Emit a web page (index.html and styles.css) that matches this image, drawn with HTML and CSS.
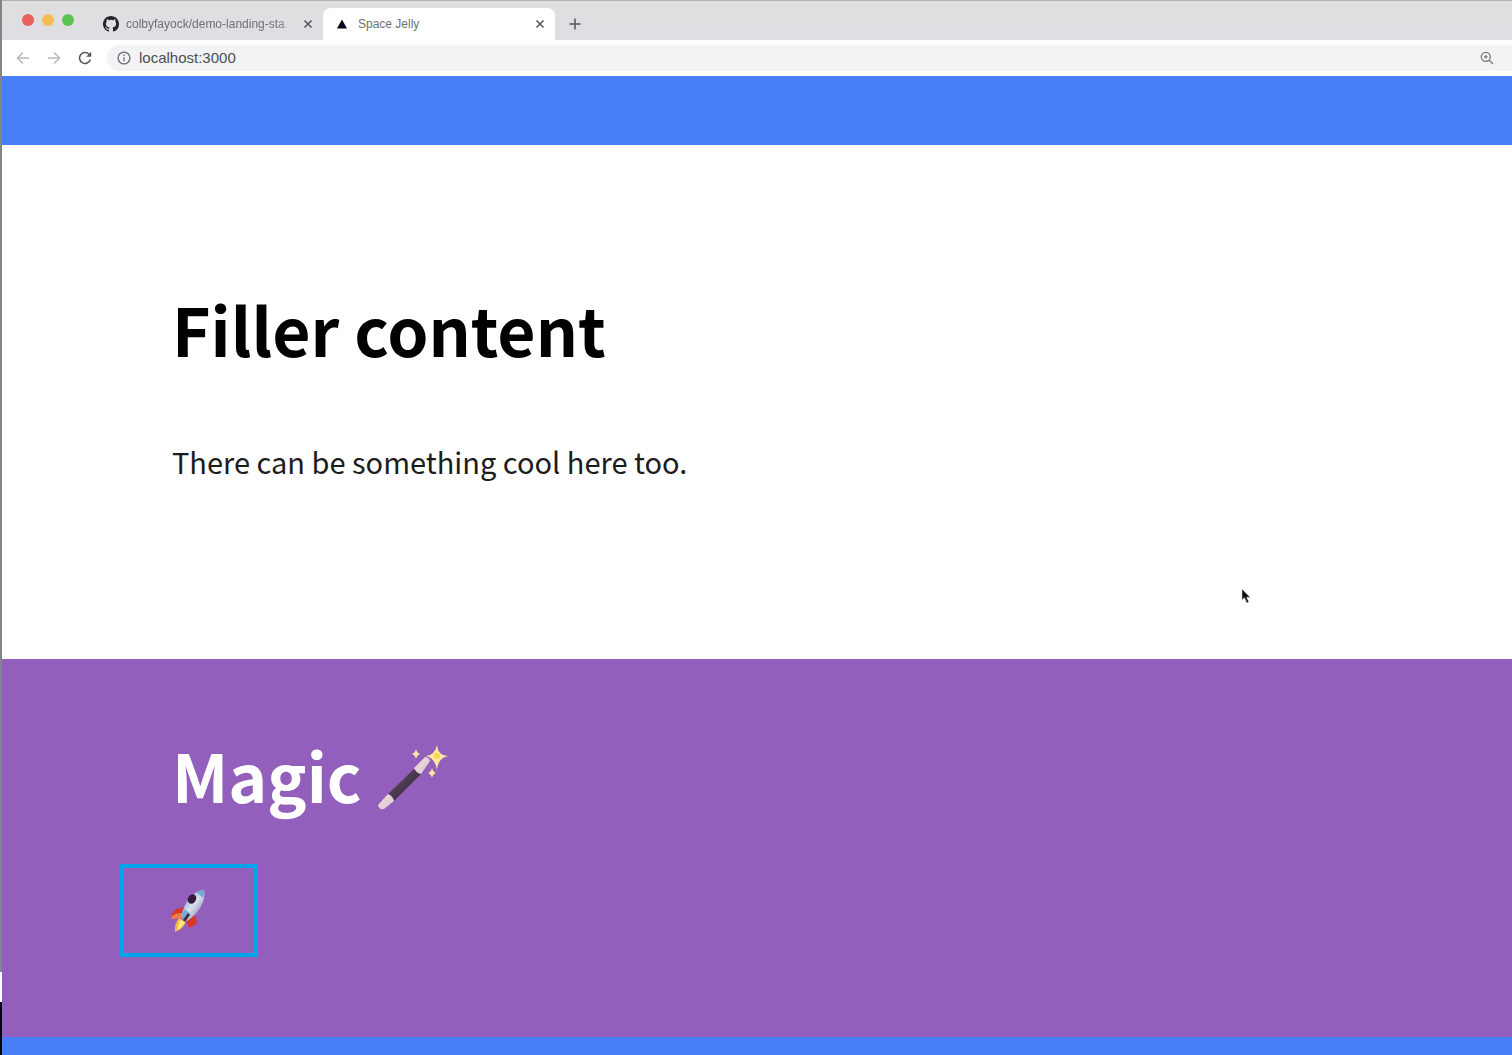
FILE: index.html
```html
<!DOCTYPE html>
<html lang="en">
<head>
<meta charset="utf-8">
<title>Space Jelly</title>
<link rel="stylesheet" href="styles.css">
</head>
<body>
<div class="desktop">
  <div class="window">
    <header class="chrome">
      <div class="tab-strip">
        <div class="lights">
          <button class="light close" aria-label="Close window"></button>
          <button class="light minimise" aria-label="Minimise window"></button>
          <button class="light expand" aria-label="Expand window"></button>
        </div>
        <div class="tab">
          <svg class="github" viewBox="0 0 16 16" aria-hidden="true"><path fill="#24242a" d="M8 0C3.58 0 0 3.58 0 8c0 3.54 2.29 6.53 5.47 7.59.4.07.55-.17.55-.38 0-.19-.01-.82-.01-1.49-2.01.37-2.53-.49-2.69-.94-.09-.23-.48-.94-.82-1.13-.28-.15-.68-.52-.01-.53.63-.01 1.08.58 1.23.82.72 1.21 1.87.87 2.33.66.07-.52.28-.87.51-1.07-1.78-.2-3.64-.89-3.64-3.95 0-.87.31-1.59.82-2.15-.08-.2-.36-1.02.08-2.12 0 0 .67-.21 2.2.82a7.6 7.6 0 0 1 4 0c1.53-1.04 2.2-.82 2.2-.82.44 1.1.16 1.92.08 2.12.51.56.82 1.27.82 2.15 0 3.07-1.87 3.75-3.65 3.95.29.25.54.73.54 1.48 0 1.07-.01 1.93-.01 2.2 0 .21.15.46.55.38A8 8 0 0 0 16 8c0-4.42-3.58-8-8-8z"/></svg>
          <span class="tab-title faded">colbyfayock/demo-landing-sta</span>
          <button class="icon-button" aria-label="Close tab"><svg class="cross" viewBox="0 0 10 10"><path d="M1.5 1.5l7 7M8.5 1.5l-7 7"/></svg></button>
        </div>
        <div class="tab active">
          <svg class="triangle" viewBox="0 0 10 10" aria-hidden="true"><path fill="#08081c" d="M5 .5L10 9.5H0z"/></svg>
          <span class="tab-title">Space Jelly</span>
          <button class="icon-button" aria-label="Close tab"><svg class="cross" viewBox="0 0 10 10"><path d="M1.5 1.5l7 7M8.5 1.5l-7 7"/></svg></button>
        </div>
        <button class="icon-button new-tab" aria-label="New tab"><svg viewBox="0 0 12 12"><path d="M6 .5v11M.5 6h11"/></svg></button>
      </div>
      <div class="toolbar">
        <button class="icon-button muted" aria-label="Back"><svg viewBox="0 0 14 14"><path d="M13 7H1.500M7 1.500L1.500 7L7 12.500"/></svg></button>
        <button class="icon-button muted" aria-label="Forward"><svg viewBox="0 0 14 14"><path d="M1 7h11.500M7 1.500L12.500 7L7 12.500"/></svg></button>
        <button class="icon-button" aria-label="Reload"><svg viewBox="0 0 14 14"><path d="M12.300 8.500A5.500 5.500 0 1 1 11 3.200"/><path class="solid" d="M13.200 .8v5H8.200z"/></svg></button>
        <div class="address">
          <svg class="info" viewBox="0 0 14 14" aria-hidden="true"><circle cx="7" cy="7" r="5.900"/><path d="M7 6.200v4M7 3.600v1.300"/></svg>
          <input class="url" type="text" aria-label="Address" value="localhost:3000" spellcheck="false">
          <button class="icon-button zoom" aria-label="Zoom"><svg viewBox="0 0 14 14"><circle cx="5.800" cy="5.800" r="4.500"/><path d="M9.200 9.200l3.800 3.800M5.800 4v3.600M4 5.800h3.600"/></svg></button>
        </div>
      </div>
    </header>
    <main class="page">
      <div class="band"></div>
      <section class="filler">
        <h1 class="heading">Filler content</h1>
        <p class="copy">There can be something cool here too.</p>
      </section>
      <section class="magic">
        <h2 class="heading">Magic
          <svg class="wand" viewBox="0 0 72 68" role="img" aria-label="Magic wand">
            <defs>
              <linearGradient id="rod" x1="0" y1="0" x2="1" y2="1"><stop offset="0" stop-color="#77717c"/><stop offset=".45" stop-color="#4d3b50"/><stop offset="1" stop-color="#2e2136"/></linearGradient>
              <linearGradient id="tip" x1="0" y1="0" x2="1" y2="1"><stop offset="0" stop-color="#fff3ef"/><stop offset="1" stop-color="#ceb2bd"/></linearGradient>
            </defs>
            <path fill="url(#rod)" d="M12 51L39 25L45 31L18 58z"/>
            <path fill="url(#tip)" d="M38 25L49 14Q53 14 54 18L45 31Q40 30 38 25zM12 51Q17 53 18 58L8 66Q3 67 2 62z"/>
            <path fill="#ffe8a0" d="M61 2Q62 13 72 13Q62 15 61 27Q59 15 50 13Q59 12 61 2zM40 6Q41 10 44 11Q41 12 40 16Q39 12 36 11Q39 10 40 6zM56 25Q57 29 60 30Q57 31 56 35Q55 31 52 30Q55 29 56 25z"/>
            <circle cx="61" cy="13" r="3" fill="#ffd54e"/>
          </svg>
        </h2>
        <div class="rocket-line">
          <svg class="rocket" viewBox="0 0 36 44" role="img" aria-label="Rocket">
            <defs><linearGradient id="hull" x1="0" y1="0" x2="1" y2="1"><stop offset="0" stop-color="#5688b8"/><stop offset=".5" stop-color="#d8e1f0"/><stop offset="1" stop-color="#736b99"/></linearGradient></defs>
            <path fill="#d9362c" d="M14 18L6 20Q1 24 1 30L11 27zM24 26Q29 32 25 36L19 39L16 32z"/>
            <path fill="#ed8144" d="M2 27Q7 23 14 25L11 29L1 30z"/>
            <path fill="#f7b445" d="M9 29L16 32Q14 40 5 43Q4 35 9 29z"/>
            <path fill="#ffe887" d="M10 31L15 33Q12 39 7 41z"/>
            <path fill="url(#hull)" d="M34 1Q36 9 30 19Q25 27 17 32L11 28Q13 18 20 8Q26 2 34 1z"/>
            <path fill="#79a9d3" d="M34 1Q35 5 33 9L26 3Q30 1 34 1zM14 20L20 24L16 31L11 28z"/>
            <ellipse cx="22" cy="10" rx="4" ry="5" transform="rotate(30 22 10)" fill="#351a3d"/>
            <path stroke="#39324e" stroke-width="3" d="M19 25L14 32"/>
          </svg>
          <span class="highlight"></span>
        </div>
      </section>
      <footer class="foot"></footer>
    </main>
  </div>
  <svg class="cursor" viewBox="0 0 10 16" aria-hidden="true"><path fill="#111" stroke="#ccc" stroke-width=".6" d="M1 1v11l2.500-2.300L5.800 15l2-1-2.200-4.700H9z"/></svg>
</div>
</body>
</html>
```
FILE: styles.css
```css
* { box-sizing: border-box; }

body {
  margin: 0;
  font-family: "Noto Sans CJK SC", "Noto Sans", sans-serif;
}

h1, h2, p { margin: 0; }

button {
  padding: 0;
  border: 0;
  background: none;
}

.desktop {
  position: relative;
  display: flex;
  min-height: 100vh;
  padding-left: 2px;
  overflow: hidden;
  background: linear-gradient(#858585 972px, #fff 972px, #fff 1002px, #000 1002px);
}

.window {
  flex: 1;
  min-width: 0;
  display: flex;
  flex-direction: column;
}

.chrome { font-family: "Liberation Sans", Arial, sans-serif; }

.tab-strip {
  display: flex;
  align-items: flex-end;
  height: 40px;
  border-top: 1px solid #b0b0b0;
  background: linear-gradient(#dfdfdf, #dfdee4);
}

.lights {
  display: flex;
  align-items: center;
  gap: 8px;
  width: 89px;
  height: 40px;
  padding-left: 20px;
}

.light {
  width: 12px;
  height: 12px;
  border-radius: 50%;
}

.close { background: #ea605c; }
.minimise { background: #f3bd50; }
.expand { background: #5dc351; }

.tab {
  display: flex;
  align-items: center;
  width: 232px;
  height: 32px;
  padding: 0 8px 0 12px;
  border-radius: 8px 8px 0 0;
  font-size: 12px;
  line-height: 16px;
  color: #707074;
}

.tab.active {
  background: #fff;
  padding-left: 14px;
}

.tab-title {
  flex: 1;
  white-space: nowrap;
}

.faded {
  mask-image: linear-gradient(to right, #000 85%, transparent 105%);
}

.github {
  width: 16px;
  height: 16px;
  margin-right: 7px;
}

.triangle {
  width: 10px;
  height: 10px;
  margin-right: 11px;
}

.icon-button {
  display: grid;
  place-items: center;
  width: 14px;
  height: 14px;
  color: #55565a;
}

.icon-button svg, .info {
  width: 14px;
  height: 14px;
  fill: none;
  stroke: currentColor;
  stroke-width: 1.5;
}

.icon-button .cross {
  width: 10px;
  height: 10px;
}

.icon-button .solid {
  fill: currentColor;
  stroke: none;
}

.new-tab {
  height: 32px;
  margin-left: 13px;
}

.new-tab svg {
  width: 12px;
  height: 12px;
}

.toolbar {
  display: flex;
  align-items: center;
  gap: 17px;
  height: 36px;
  padding-left: 14px;
  background: #fff;
}

.icon-button.muted { color: #b8b8bb; }

.address {
  flex: 1;
  display: flex;
  align-items: center;
  height: 26px;
  padding: 0 18px 0 10px;
  border-radius: 13px 0 0 13px;
  margin-left: -2px;
  background: #f2f3f5;
}

.info { color: #6a6b6f; }

.info, .zoom svg { stroke-width: 1.3; }

.icon-button.zoom { color: #77777a; }

.url {
  flex: 1;
  min-width: 0;
  padding: 0 8px;
  border: 0;
  outline: 0;
  background: none;
  font: 15px/20px "Liberation Sans", Arial, sans-serif;
  color: #4d4e52;
}

.page {
  flex: 1;
  display: flex;
  flex-direction: column;
  background: #fff;
}

.band {
  height: 69px;
  background: #477ff7;
}

.filler {
  padding: 143px 170px 174px;
}

.heading {
  font-size: 66px;
  line-height: 80px;
  font-weight: 700;
  color: #000;
}

.copy {
  margin-top: 69px;
  font-size: 29px;
  line-height: 48px;
  color: #1c1c1c;
}

.magic {
  padding: 75px 170px 102px;
  background: #925fbd;
}

.magic .heading {
  display: flex;
  align-items: center;
  gap: 14px;
  color: #fff;
}

.wand {
  width: 72px;
  height: 68px;
  margin-top: 6px;
}

.rocket-line {
  position: relative;
  display: flex;
  align-items: center;
  width: 36px;
  height: 48px;
  margin: 73px 0 0 -2px;
}

.rocket {
  width: 36px;
  height: 44px;
}

.highlight {
  position: absolute;
  inset: -23px -52px -22px -50px;
  border: 4px solid #00a5e9;
}

.foot {
  flex: 1;
  min-height: 18px;
  background: #477ff7;
}

.cursor {
  position: absolute;
  left: 1241px;
  top: 588px;
  width: 10px;
  height: 16px;
}
```
